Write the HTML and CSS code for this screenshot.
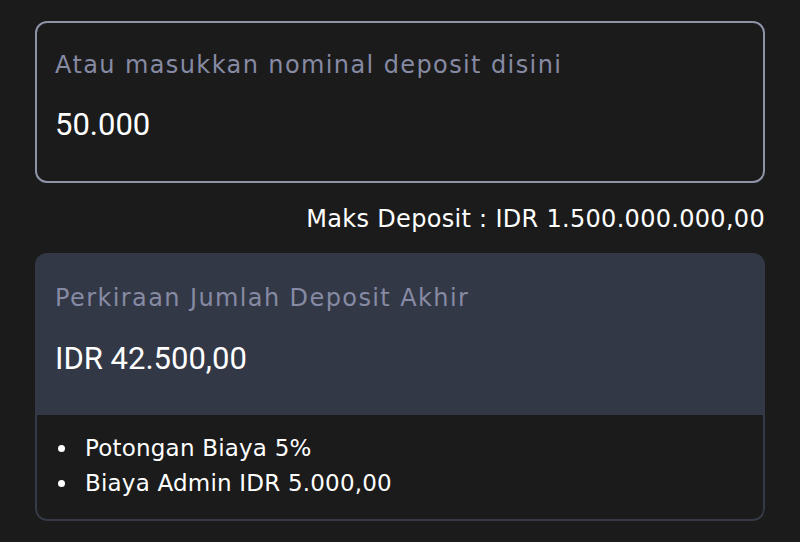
FILE: index.html
```html
<!DOCTYPE html>
<html lang="id">
<head>
<meta charset="utf-8">
<link rel="stylesheet" href="styles.css">
</head>
<body>
<div class="page">
  <div class="input-box">
    <div class="label">Atau masukkan nominal deposit disini</div>
    <div class="value">50.000</div>
  </div>
  <div class="max">Maks Deposit : IDR 1.500.000.000,00</div>
  <div class="estimate">
    <div class="estimate-top">
      <div class="label">Perkiraan Jumlah Deposit Akhir</div>
      <div class="value">IDR 42.500,00</div>
    </div>
    <ul class="fees">
      <li>Potongan Biaya 5%</li>
      <li>Biaya Admin IDR 5.000,00</li>
    </ul>
  </div>
</div>
</body>
</html>
```
FILE: styles.css
```css
html, body {
  margin: 0;
  padding: 0;
  background: #1b1b1b;
}
.page {
  padding: 21px 35px 0 35px;
  display: flex;
  flex-direction: column;
  font-family: "DejaVu Sans", sans-serif;
}
.input-box {
  height: 162px;
  box-sizing: border-box;
  border: 2px solid #8f93a7;
  border-radius: 12px;
  padding: 25px 18px 0 18px;
  display: flex;
  flex-direction: column;
  gap: 25px;
}
.label {
  color: #868aa3;
  font-size: 24px;
  letter-spacing: 1.4px;
  line-height: 34px;
}
.value {
  color: #ffffff;
  font-family: Roboto, sans-serif;
  font-size: 31px;
  line-height: 36px;
}
.max {
  align-self: flex-end;
  color: #ffffff;
  font-size: 24px;
  letter-spacing: 0.3px;
  line-height: 34px;
  margin-top: 19px;
}
.estimate {
  margin-top: 17px;
  border-radius: 12px;
  overflow: hidden;
  display: flex;
  flex-direction: column;
}
.estimate-top {
  background: #333847;
  height: 162px;
  box-sizing: border-box;
  padding: 28px 20px 0 20px;
  display: flex;
  flex-direction: column;
  gap: 26px;
}
.fees {
  margin: 0;
  list-style: none;
  height: 106px;
  box-sizing: border-box;
  border: 2px solid #363a47;
  border-top: none;
  border-radius: 0 0 12px 12px;
  padding: 16px 0 0 21px;
  color: #ffffff;
  font-size: 23px;
  letter-spacing: 0.2px;
  line-height: 35px;
}
.fees li {
  display: flex;
  align-items: center;
  gap: 20px;
}
.fees li::before {
  content: "";
  width: 7px;
  height: 7px;
  border-radius: 50%;
  background: #ffffff;
  flex: none;
}
```
